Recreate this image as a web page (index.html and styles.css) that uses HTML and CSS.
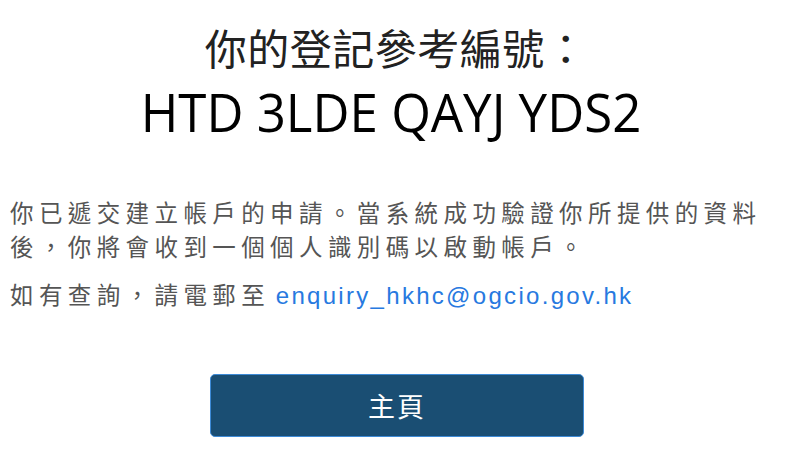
FILE: index.html
```html
<!DOCTYPE html>
<html lang="zh-Hant">
<head>
  <meta charset="UTF-8">
  <meta name="viewport" content="width=device-width, initial-scale=1.0">
  <title>登記完成</title>
  <link rel="stylesheet" href="styles.css">
</head>
<body>
  <div class="page">
    <div class="ref">
      <h1>你的登記參考編號：</h1>
      <div class="code">HTD 3LDE QAYJ YDS2</div>
    </div>

    <div class="msg">
      <p>你已遞交建立帳戶的申請。當系統成功驗證你所提供的資料後，你將會收到一個個人識別碼以啟動帳戶。</p>
      <p>如有查詢，請電郵至 <a href="mailto:enquiry_hkhc@ogcio.gov.hk">enquiry_hkhc@ogcio.gov.hk</a></p>
    </div>

    <div class="actions">
      <button type="button">主頁</button>
    </div>
  </div>
</body>
</html>
```

FILE: styles.css
```css
body {
  margin: 0;
  background: white;
  font-family: "Noto Sans CJK TC", "Noto Sans", sans-serif;
}
.page {
  width: 800px;
  height: 476px;
  overflow: hidden;
}
.ref {
  text-align: center;
  padding-top: 18px;
}
h1 {
  margin: 0 0 0 -8px;
  font-size: 42px;
  font-weight: 400;
  line-height: 58px;
  color: #222;
  letter-spacing: 0.5px;
}
.code {
  margin: 6px 0 0 -18px;
  font-family: "Open Sans", sans-serif;
  font-size: 53px;
  line-height: 60px;
  color: #000;
  transform: scaleX(0.963);
}
.msg {
  margin-top: 53px;
  padding: 0 10px;
  color: #555;
  font-size: 23.5px;
}
.msg p {
  margin: 0 0 14px;
  line-height: 34px;
  letter-spacing: 5.4px;
}
.msg a {
  margin-left: -5px;
  color: #2779e0;
  text-decoration: none;
  font-family: "Liberation Sans", Arial, sans-serif;
  font-size: 24px;
  letter-spacing: 2.3px;
}
.actions {
  padding-left: 210px;
  margin-top: 61px;
}
button {
  width: 374px;
  height: 63px;
  background: #1a4e73;
  border: 1px solid #3d8ad6;
  border-radius: 5px;
  color: white;
  font-family: "Noto Sans CJK TC", serif;
  font-size: 27px;
  font-weight: 400;
  letter-spacing: 2px;
  cursor: pointer;
}
```
